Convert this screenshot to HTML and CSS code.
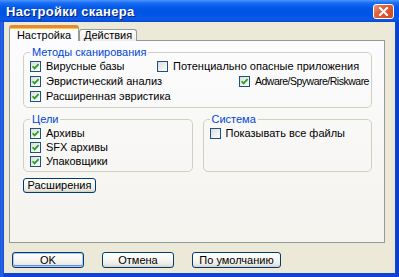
FILE: index.html
```html
<!DOCTYPE html>
<html>
<head>
<meta charset="utf-8">
<link rel="stylesheet" href="styles.css">
</head>
<body>
<div class="window">
  <div class="titlebar">
    <span class="title">Настройки сканера</span>
    <span class="close"><svg width="11" height="9" viewBox="0 0 11 9"><path d="M2 1 L9 8 M9 1 L2 8" stroke="#fff" stroke-width="2" stroke-linecap="square"/></svg></span>
  </div>
  <div class="client">
    <div class="tabs">
      <div class="tab active">Настройка</div>
      <div class="tab">Действия</div>
    </div>
    <div class="panel">
      <fieldset class="group methods">
        <legend>Методы сканирования</legend>
        <div class="grid2">
          <label class="cb"><span class="box"><svg viewBox="0 0 9 9"><path d="M1.6 4.2 L3.6 6.4 L7.6 2.2" fill="none" stroke="#21a121" stroke-width="1.7"/></svg></span>Вирусные базы</label>
          <label class="cb"><span class="box"></span>Потенциально опасные приложения</label>
          <label class="cb"><span class="box"><svg viewBox="0 0 9 9"><path d="M1.6 4.2 L3.6 6.4 L7.6 2.2" fill="none" stroke="#21a121" stroke-width="1.7"/></svg></span>Эвристический анализ</label>
          <label class="cb adware"><span class="box"><svg viewBox="0 0 9 9"><path d="M1.6 4.2 L3.6 6.4 L7.6 2.2" fill="none" stroke="#21a121" stroke-width="1.7"/></svg></span><span class="latin">Adware/Spyware/Riskware</span></label>
          <label class="cb"><span class="box"><svg viewBox="0 0 9 9"><path d="M1.6 4.2 L3.6 6.4 L7.6 2.2" fill="none" stroke="#21a121" stroke-width="1.7"/></svg></span>Расширенная эвристика</label>
        </div>
      </fieldset>
      <div class="row2">
        <fieldset class="group small">
          <legend>Цели</legend>
          <label class="cb"><span class="box"><svg viewBox="0 0 9 9"><path d="M1.6 4.2 L3.6 6.4 L7.6 2.2" fill="none" stroke="#21a121" stroke-width="1.7"/></svg></span>Архивы</label>
          <label class="cb"><span class="box"><svg viewBox="0 0 9 9"><path d="M1.6 4.2 L3.6 6.4 L7.6 2.2" fill="none" stroke="#21a121" stroke-width="1.7"/></svg></span>SFX архивы</label>
          <label class="cb"><span class="box"><svg viewBox="0 0 9 9"><path d="M1.6 4.2 L3.6 6.4 L7.6 2.2" fill="none" stroke="#21a121" stroke-width="1.7"/></svg></span>Упаковщики</label>
        </fieldset>
        <fieldset class="group small">
          <legend>Система</legend>
          <label class="cb"><span class="box"></span>Показывать все файлы</label>
        </fieldset>
      </div>
      <button class="btn ext">Расширения</button>
    </div>
    <div class="buttons">
      <button class="btn ok">OK</button>
      <button class="btn">Отмена</button>
      <button class="btn wide">По умолчанию</button>
    </div>
  </div>
</div>
</body>
</html>
```
FILE: styles.css
```css
html, body {
  margin: 0;
  padding: 0;
  overflow: hidden;
  background: #0842d0;
}
* { box-sizing: border-box; }

.window {
  width: 399px;
  height: 277px;
  display: flex;
  flex-direction: column;
  background: linear-gradient(90deg, #1a55d8 0, #2d6bea 2px, #0c45d6 4px, #0c45d6 395px, #0a3ec8 399px);
  font-family: "Liberation Sans", Arial, sans-serif;
  font-size: 11px;
  color: #000;
}

.titlebar {
  height: 22px;
  flex: none;
  display: flex;
  align-items: center;
  justify-content: space-between;
  padding: 0 5px 0 6px;
  background: linear-gradient(#4a97ff 0, #1a6cf2 3px, #0058e6 8px, #0054e3 14px, #0a5ae8 19px, #0848d4 22px);
}
.title {
  color: #fff;
  font-weight: bold;
  font-size: 13px;
  letter-spacing: 0.3px;
  text-shadow: 1px 1px 0 #0a1d70;
  padding-top: 1px;
}
.close {
  width: 21px;
  height: 15px;
  border: 1px solid #fff;
  border-radius: 3px;
  background: linear-gradient(135deg, #e99a7e 0, #e0623e 35%, #d2461e 100%);
  display: flex;
  align-items: center;
  justify-content: center;
  margin-top: 1px;
}

.client {
  flex: 1;
  margin: 0 4px 4px 4px;
  background: #ece9d8;
  padding: 3px 0 0 5px;
  display: flex;
  flex-direction: column;
}

.tabs {
  display: flex;
  align-items: flex-end;
  height: 16px;
  margin-bottom: -1px;
  position: relative;
  z-index: 1;
}
.tab {
  height: 12px;
  line-height: 11px;
  padding: 0 4px;
  border: 1px solid #919b9c;
  border-bottom: none;
  border-radius: 3px 3px 0 0;
  background: linear-gradient(#ffffff, #ecebe6);
  width: 58px;
  text-align: center;
}
.tab.active {
  height: 16px;
  width: 70px;
  line-height: 12px;
  border-top: 3px solid #e68b2c;
  box-shadow: inset 0 1px 0 #ffc83c;
  background: #fcfcfe;
  padding-top: 1px;
}

.panel {
  width: 376px;
  height: 203px;
  border: 1px solid #919b9c;
  background: linear-gradient(#fcfcfe, #f4f3ee);
  padding: 5px 12px 0 13px;
  display: flex;
  flex-direction: column;
  align-items: flex-start;
}

.group {
  margin: 0;
  border: 1px solid #d0d0bf;
  border-radius: 5px;
  min-width: 0;
}
.group legend {
  padding: 0 2px;
  color: #0046d5;
  line-height: 13px;
  height: 13px;
}
.methods {
  width: 100%;
  padding: 0 6px 4px 6px;
}
.grid2 {
  display: grid;
  grid-template-columns: 127px auto;
  grid-auto-rows: 14px;
  row-gap: 1px;
}
.adware { margin-left: 82px; }
.latin { letter-spacing: -0.5px; font-size: 10.5px; }

.cb {
  display: flex;
  align-items: center;
  height: 14px;
  gap: 5px;
  white-space: nowrap;
}
.box {
  width: 11px;
  height: 11px;
  border: 1px solid #1c5180;
  background: linear-gradient(135deg, #dcdcd7, #ffffff);
  flex: none;
  display: flex;
}
.box svg { width: 9px; height: 9px; }

.row2 {
  width: 100%;
  display: grid;
  grid-template-columns: 1fr 1fr;
  column-gap: 10px;
  margin-top: 5px;
}
.small {
  padding: 0 6px 3px 6px;
}

.btn {
  font-family: "Liberation Sans", Arial, sans-serif;
  font-size: 11px;
  color: #000;
  height: 16px;
  padding: 0;
  border: 1px solid #003c74;
  border-radius: 3px;
  background: linear-gradient(#ffffff 0, #f6f6f2 50%, #ecebe4 80%, #d6d0c5 100%);
  line-height: 13px;
}
.ext {
  width: 73px;
  height: 15px;
  margin-top: 6px;
}
.buttons {
  display: flex;
  gap: 18px;
  margin: 9px 0 0 3px;
}
.buttons .btn { width: 72px; }
.buttons .btn.wide { width: 89px; }
.btn.ok {
  box-shadow: inset 0 0 0 1px #aac8f4, inset 0 -1px 0 1px #6c8fe0;
}
```
